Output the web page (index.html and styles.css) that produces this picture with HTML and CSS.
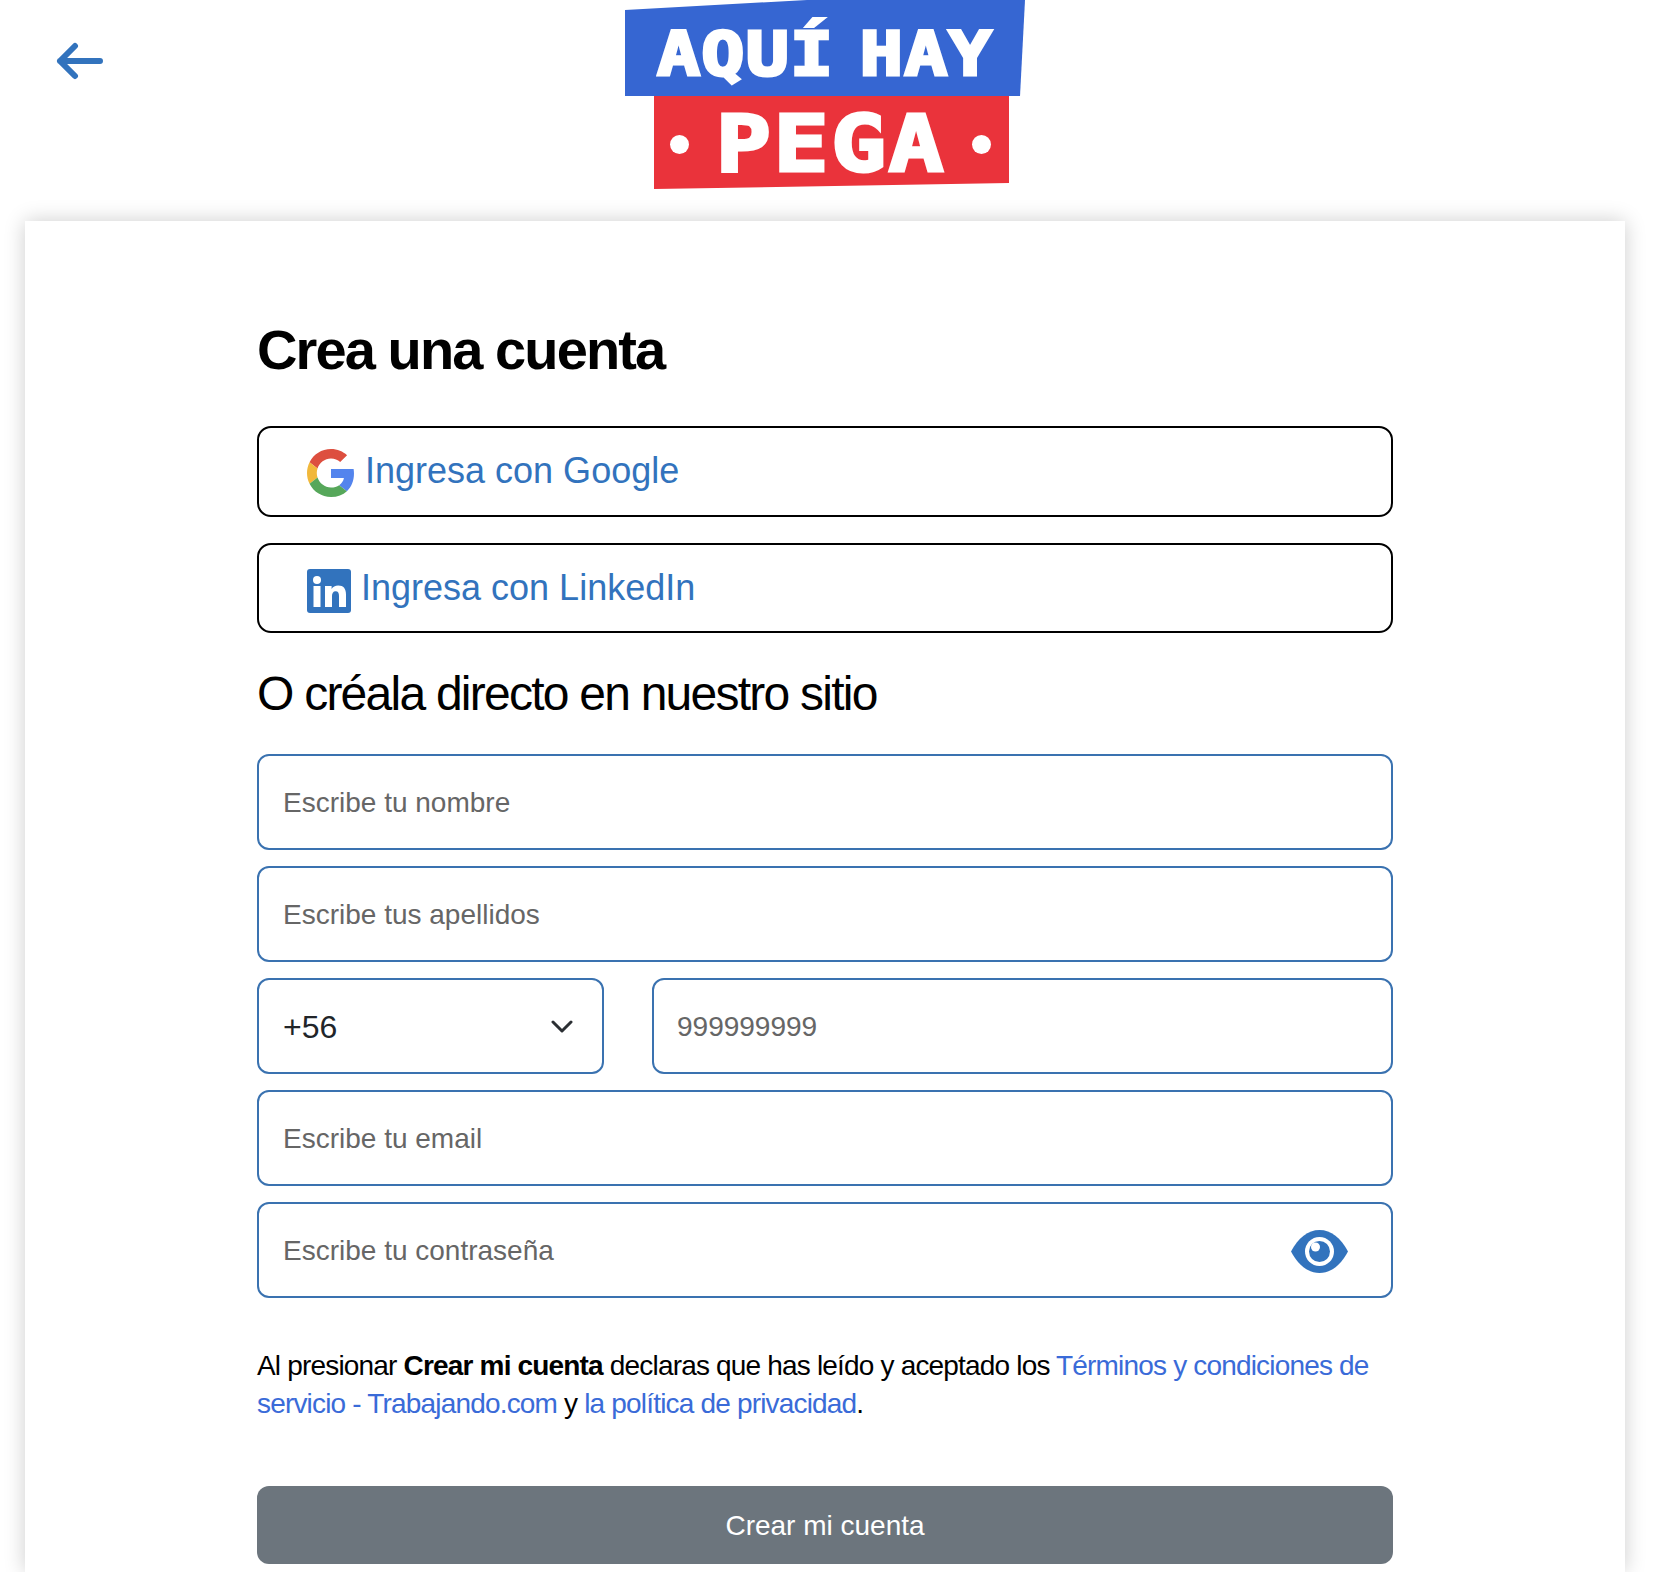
FILE: index.html
```html
<!DOCTYPE html>
<html lang="es">
<head>
  <meta charset="UTF-8">
  <title>Crea una cuenta</title>
  <link rel="stylesheet" href="styles.css">
</head>
<body>

  <header class="cabecera">
    <a class="volver" href="#" aria-label="Volver">
      <svg width="47" height="38" viewBox="0 0 47 38" fill="none" stroke="#3273bd" stroke-width="6" stroke-linecap="round" stroke-linejoin="round">
        <path d="M44 19H4M19 4L4 19l15 15"/>
      </svg>
    </a>
    <div class="logo">
      <div class="logo-azul"><span class="logo-texto">AQUÍ HAY</span></div>
      <div class="logo-rojo"><span class="punto"></span><span class="logo-texto">PEGA</span><span class="punto"></span></div>
    </div>
  </header>

  <main class="tarjeta">
    <div class="contenido">
      <h1>Crea una cuenta</h1>

      <a class="social" href="#">
        <svg class="icono-google" width="48" height="48" viewBox="0 0 48 48">
          <path fill="#dd4f3f" d="M24 9.5c3.54 0 6.71 1.22 9.21 3.6l6.85-6.85C35.9 2.38 30.47 0 24 0 14.62 0 6.51 5.38 2.56 13.22l7.98 6.19C12.43 13.72 17.74 9.5 24 9.5z"/>
          <path fill="#5384ed" d="M46.98 24.55c0-1.57-.15-3.09-.38-4.55H24v9.02h12.94c-.58 2.96-2.26 5.48-4.78 7.18l7.73 6c4.51-4.18 7.09-10.36 7.09-17.65z"/>
          <path fill="#f1b83b" d="M10.53 28.59c-.48-1.45-.76-2.99-.76-4.59s.27-3.14.76-4.59l-7.98-6.19C.92 16.46 0 20.12 0 24c0 3.88.92 7.54 2.56 10.78l7.97-6.19z"/>
          <path fill="#56a75a" d="M24 48c6.48 0 11.93-2.13 15.89-5.81l-7.73-6c-2.15 1.45-4.92 2.3-8.16 2.3-6.26 0-11.57-4.22-13.47-9.91l-7.98 6.19C6.51 42.62 14.62 48 24 48z"/>
        </svg>
        Ingresa con Google
      </a>
      <a class="social" href="#">
        <svg class="icono-linkedin" width="44" height="44" viewBox="0 0 44 44">
          <rect width="44" height="44" rx="3" fill="#3273bd"/>
          <g fill="#fff">
            <circle cx="10" cy="11" r="4"/>
            <rect x="6.5" y="17" width="7" height="21"/>
            <path d="M18 17h6.6v3c1.2-2.2 3.6-3.6 6.6-3.6 5.4 0 7.8 3.3 7.8 9V38h-7V27c0-3-.9-4.8-3.3-4.8-2.7 0-3.7 2.1-3.7 4.8v11h-7z"/>
          </g>
        </svg>
        Ingresa con LinkedIn
      </a>

      <h2>O créala directo en nuestro sitio</h2>

      <form class="formulario">
        <input class="campo" type="text" placeholder="Escribe tu nombre">
        <input class="campo" type="text" placeholder="Escribe tus apellidos">
        <div class="fila">
          <div class="selector">
            <select class="campo lista">
              <option>+56</option>
            </select>
            <svg class="flecha" width="22" height="13" viewBox="0 0 22 13" fill="none" stroke="#2b2f33" stroke-width="3" stroke-linecap="round" stroke-linejoin="round">
              <path d="M2 2l9 9 9-9"/>
            </svg>
          </div>
          <input class="campo telefono" type="tel" placeholder="999999999">
        </div>
        <input class="campo" type="email" placeholder="Escribe tu email">
        <div class="clave">
          <input class="campo" type="password" placeholder="Escribe tu contraseña">
          <svg class="ojo" width="57" height="43" viewBox="0 0 57 43">
            <path fill="#3273bd" d="M0 21.5C7 8 17 0 28.5 0S50 8 57 21.5C50 35 40 43 28.5 43S7 35 0 21.5z"/>
            <circle cx="28.5" cy="21.5" r="14.5" fill="#fff"/>
            <circle cx="28.5" cy="21.5" r="10.5" fill="#3273bd"/>
            <circle cx="24.5" cy="17" r="4.5" fill="#fff"/>
          </svg>
        </div>
      </form>

      <p class="legal">Al presionar <strong>Crear mi cuenta</strong> declaras que has leído y aceptado los <a href="#">Términos y condiciones de servicio - Trabajando.com</a> y <a href="#">la política de privacidad</a>.</p>

      <button class="crear" type="button">Crear mi cuenta</button>
    </div>
  </main>

</body>
</html>
```

FILE: styles.css
```css
html, body {
  height: 1572px;
  overflow: hidden;
}
body {
  margin: 0;
  background-color: #fff;
  font-family: "Liberation Sans", Arial, sans-serif;
  color: #000;
}

/* --- Cabecera --- */
.cabecera {
  display: flex;
  align-items: flex-start;
  height: 221px;
  padding-left: 56px;
}
.volver {
  display: block;
  width: 47px;
  height: 38px;
  margin-top: 42px;
  margin-right: 522px;
}
.volver svg {
  display: block;
}
.logo {
  width: 400px;
  color: #fff;
  font-family: "DejaVu Sans Mono", monospace;
  font-weight: bold;
  text-align: center;
  -webkit-text-stroke: 3px #fff;
}
.logo-texto {
  display: inline-block;
  transform: scaleX(1.175);
}
.logo-azul {
  height: 96px;
  line-height: 108px;
  font-size: 61px;
  letter-spacing: 1px;
  word-spacing: -16px;
  background-color: #3666d2;
  clip-path: polygon(0 10px, 182px 0, 100% 0, 395px 100%, 0 100%);
}
.logo-rojo {
  display: flex;
  align-items: center;
  justify-content: space-between;
  box-sizing: border-box;
  width: 355px;
  height: 93px;
  margin-left: 29px;
  padding: 3px 18px 0 16px;
  font-size: 78px;
  letter-spacing: 2px;
  line-height: 93px;
  background-color: #ea333b;
  clip-path: polygon(0 0, 100% 0, 100% 87px, 0 100%);
}
.punto {
  width: 19px;
  height: 19px;
  border-radius: 50%;
  background-color: #fff;
}

/* --- Tarjeta --- */
.tarjeta {
  box-sizing: border-box;
  width: 1600px;
  height: 1351px;
  margin-left: 25px;
  padding: 97px 232px 0;
  background-color: #fff;
  box-shadow: 0 0 20px rgba(0,0,0,0.2);
}
h1 {
  margin: 0 0 44px;
  font-size: 56px;
  line-height: 64px;
  letter-spacing: -1.9px;
}
h2 {
  margin: 33px 0 32px;
  font-size: 48px;
  font-weight: normal;
  line-height: 56px;
  letter-spacing: -1.76px;
}
.social {
  display: flex;
  align-items: center;
  box-sizing: border-box;
  height: 90.5px;
  margin-bottom: 26px;
  padding-left: 48px;
  border: 2px solid #000;
  border-radius: 14px;
  color: #3273bd;
  font-size: 36px;
  text-decoration: none;
}
.social:last-of-type {
  margin-bottom: 0;
}
.icono-google {
  margin-top: 4px;
  margin-right: 10px;
}
.icono-linkedin {
  margin-top: 6px;
  margin-right: 10px;
}

/* --- Formulario --- */
.formulario {
  display: flex;
  flex-direction: column;
  gap: 16px;
}
.campo {
  display: block;
  box-sizing: border-box;
  width: 100%;
  height: 96px;
  padding: 2px 24px 0;
  border: 2px solid #3a72b0;
  border-radius: 12px;
  background-color: #fff;
  color: #212529;
  font-family: inherit;
  font-size: 28px;
  outline: none;
}
.campo::placeholder {
  color: #666;
  opacity: 1;
}
.fila {
  display: flex;
  gap: 48px;
}
.selector {
  position: relative;
  flex: 0 0 347px;
}
.lista {
  appearance: none;
  font-size: 32px;
}
.flecha {
  position: absolute;
  top: 42px;
  right: 31px;
}
.telefono {
  flex: 1;
  padding-left: 23px;
}
.clave {
  position: relative;
}
.ojo {
  position: absolute;
  top: 28px;
  right: 45px;
}

/* --- Final --- */
.legal {
  margin: 49px 0 63px;
  font-size: 28px;
  line-height: 38px;
  letter-spacing: -0.82px;
}
.legal a {
  color: #3a6bd8;
  text-decoration: none;
}
.crear {
  display: block;
  width: 100%;
  height: 78px;
  padding-top: 2px;
  border: 0;
  border-radius: 12px;
  background-color: #6c757d;
  color: #fff;
  font-family: inherit;
  font-size: 28px;
  cursor: pointer;
}
```
